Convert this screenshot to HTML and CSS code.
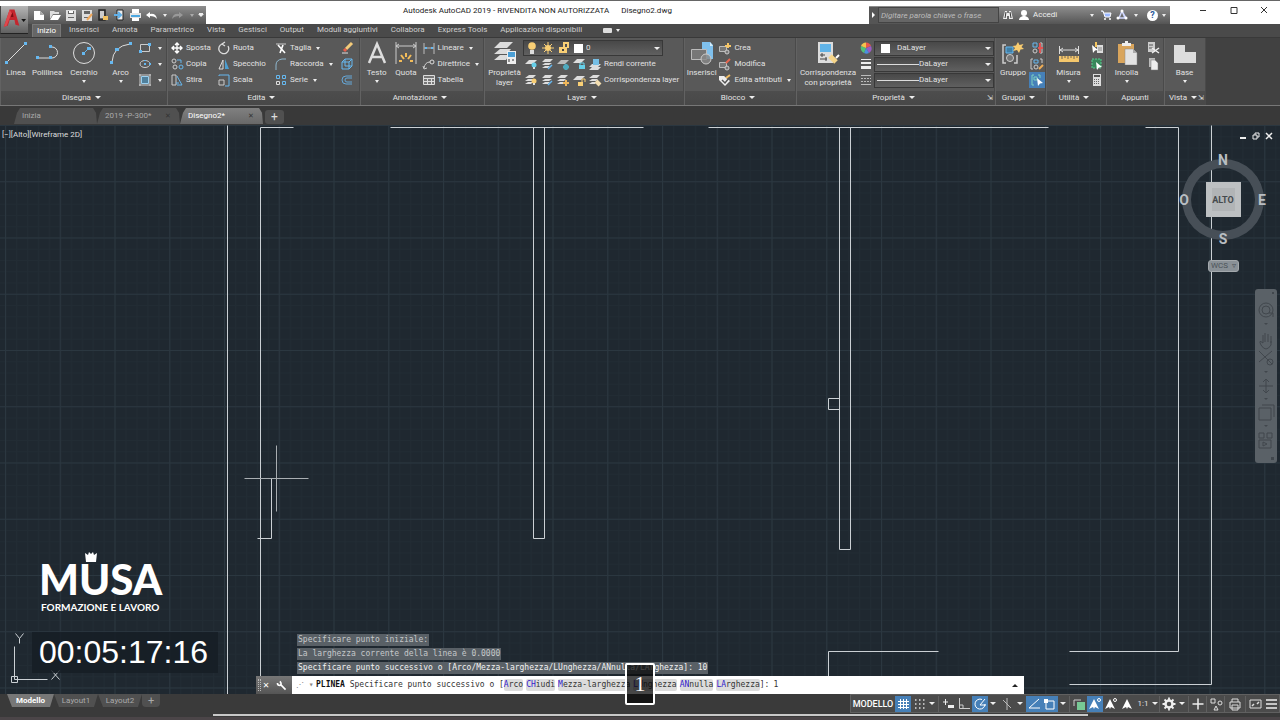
FILE: index.html
```html
<!DOCTYPE html>
<html lang="it">
<head>
<meta charset="utf-8">
<title>Autodesk AutoCAD 2019 - Disegno2.dwg</title>
<link rel="stylesheet" href="styles.css">
</head>
<body>
<svg class="sprite" aria-hidden="true">
  <symbol id="new" viewBox="0 0 16 16"><path fill="#fff" d="M3 4h6l4 4v5H3z"/><path fill="#aaa" d="M9 4v4h4z"/></symbol>
  <symbol id="open" viewBox="0 0 16 16"><path fill="#ddd" d="M3 4h4l1 1h4v2H6l-3 5z"/><path fill="#fff" d="M6 8h8l-3 5H3z"/></symbol>
  <symbol id="save" viewBox="0 0 16 16"><path fill="#ddd" d="M3 3h10v11H3z"/><path fill="#666" d="M5 4h6v3H5zM5 10h6v1H5z"/><path fill="#fff" d="M6 4h4v2H6z"/></symbol>
  <symbol id="saveas" viewBox="0 0 16 16"><path fill="#ddd" d="M3 3h10v11H3z"/><path fill="#666" d="M5 4h6v3H5zM5 10h4v1H5z"/><path stroke="#efa75a" stroke-width="2" d="M8 13l5-6"/></symbol>
  <symbol id="webopen" viewBox="0 0 16 16"><path fill="none" stroke="#222" stroke-width="1.5" d="M4 3h6v10H4z"/><path fill="#ccc" d="M5 4h4v7H5z"/><path fill="#f0c060" d="M8 9h5v4H8z"/></symbol>
  <symbol id="websave" viewBox="0 0 16 16"><path fill="#eee" stroke="#222" d="M6 3h6v10H6z"/><path stroke="#60b0e8" stroke-width="2" d="M3 8h6M7 5l3 3-3 3" fill="none"/></symbol>
  <symbol id="print" viewBox="0 0 16 16"><path fill="#fff" d="M5 2h7v4H5zM5 11h7v3H5z"/><path fill="#e5e5e5" d="M3 6h11v5H3z"/><path fill="#4da7e0" d="M4 8h9v2H4z"/></symbol>
  <symbol id="undo" viewBox="0 0 16 16"><path fill="#fff" d="M3 8l4-3v2q6-1 7 5-2-3-7-3v2z"/></symbol>
  <symbol id="redo" viewBox="0 0 16 16"><path fill="#999" d="M13 8L9 5v2q-6-1-7 5 2-3 7-3v2z"/></symbol>
  <symbol id="binoc" viewBox="0 0 16 16"><path fill="#eee" d="M5 4h2v2h2V4h2l2 8H9V9H7v3H3z"/><path stroke="#333" d="M6 5L5 11M10 5l1 6"/></symbol>
  <symbol id="person" viewBox="0 0 16 16"><circle cx="8" cy="6" r="3" fill="#fff"/><path fill="#fff" d="M3 13q0-3 4-4h2q4 1 4 4z"/></symbol>
  <symbol id="cart" viewBox="0 0 16 16"><path fill="#9bb8ff" stroke="#fff" d="M3 4h2l2 6h5l1-4H6"/><circle cx="7" cy="12" r="1" fill="#fff"/><circle cx="12" cy="12" r="1" fill="#fff"/></symbol>
  <symbol id="a360" viewBox="0 0 16 16"><path fill="none" stroke="#d0d8ff" stroke-width="1.4" d="M8 4L5 11h7zL11 11"/><circle cx="8" cy="4" r="1.5" fill="#fff"/><circle cx="4" cy="11" r="1.5" fill="#fff"/><circle cx="12" cy="11" r="1.5" fill="#fff"/></symbol>

  <symbol id="line" viewBox="0 0 24 24"><path stroke="#ddd" d="M3 21L21 3"/><path fill="#66b8f0" d="M1 20h3v3H1zM20 1h3v3h-3z"/></symbol>
  <symbol id="pline" viewBox="0 0 24 24"><path fill="none" stroke="#ddd" d="M2 17h15a5 5 0 0 0 0-11h-1"/><path fill="#66b8f0" d="M1 15h3v3H1zM14 15h3v3h-3zM14 4h3v3h-3z"/></symbol>
  <symbol id="circle" viewBox="0 0 24 24"><circle cx="12" cy="12" r="10.5" fill="none" stroke="#ddd"/><path stroke="#66b8f0" d="M12 12l5-5"/><path fill="#66b8f0" d="M10 11h3v3h-3zM15 6h4v3h-4z"/></symbol>
  <symbol id="arc" viewBox="0 0 24 24"><path fill="none" stroke="#ddd" d="M3 21Q4 5 21 3"/><path fill="#66b8f0" d="M1 20h3v3H1zM20 1h3v3h-3zM6 7h4v3H6z"/></symbol>
  <symbol id="rect" viewBox="0 0 16 16"><path fill="none" stroke="#ccc" d="M3.500 4.500h9v7h-9z"/><path fill="#66b8f0" d="M2 10h3v3H2zM11 3h3v3h-3z"/></symbol>
  <symbol id="ellipse" viewBox="0 0 16 16"><ellipse cx="8" cy="8" rx="5" ry="3.500" fill="none" stroke="#ccc"/><path fill="#66b8f0" d="M7 7h2v2H7zM12 7h2v2h-2zM7 4h2v1H7z"/></symbol>
  <symbol id="hatch" viewBox="0 0 16 16"><path fill="#50809c" stroke="#9cd0ee" d="M4.500 4.500h7v7h-7z"/><path stroke="#ccc" d="M3 2v12M13 2v12M2 3h12M2 13h12" fill="none"/></symbol>
  <symbol id="move" viewBox="0 0 16 16"><path fill="none" stroke="#fff" stroke-width="1.400" d="M8 3v10M3 8h10M6 5l2-2 2 2M6 11l2 2 2-2M5 6L3 8l2 2M11 6l2 2-2 2"/></symbol>
  <symbol id="copy" viewBox="0 0 16 16"><g fill="none" stroke="#ccc"><circle cx="5" cy="5" r="2"/><circle cx="6" cy="11" r="2"/><path stroke="#66b8f0" d="M10 4h2v3M8 4h2"/><circle stroke="#66b8f0" cx="12" cy="11" r="2"/></g></symbol>
  <symbol id="stretch" viewBox="0 0 16 16"><path fill="none" stroke="#ccc" d="M3 3h4v10H3z"/><path fill="none" stroke="#66b8f0" d="M8 4l5 9H8M7 11h3"/></symbol>
  <symbol id="rotate" viewBox="0 0 16 16"><path fill="none" stroke="#ddd" stroke-width="1.300" d="M6 4a5 5 0 1 0 6 2M9 2l-3 2 3 2"/></symbol>
  <symbol id="mirror" viewBox="0 0 16 16"><path fill="#4d9ed0" d="M9 3l4 10H9z"/><path fill="none" stroke="#ddd" d="M7 4v9H3z"/></symbol>
  <symbol id="scale" viewBox="0 0 16 16"><path fill="none" stroke="#66b8f0" d="M3 4V3h10v11H9"/><path fill="none" stroke="#ccc" d="M3 8h5v5H3z"/></symbol>
  <symbol id="trim" viewBox="0 0 16 16"><path stroke="#ccc" d="M3 4h10"/><path stroke="#fff" stroke-width="1.600" d="M5 5l7 8M10 5l-3 8"/></symbol>
  <symbol id="fillet" viewBox="0 0 16 16"><path fill="none" stroke="#8fb8d0" d="M3 14V9q0-5 6-6h4"/></symbol>
  <symbol id="array" viewBox="0 0 16 16"><path fill="none" stroke="#66b8f0" d="M3.500 3.500h3v3h-3zM9.500 3.500h3v3h-3zM9.500 9.500h3v3h-3z"/><path fill="none" stroke="#ddd" d="M3.500 9.500h3v3h-3z"/></symbol>
  <symbol id="erase" viewBox="0 0 16 16"><path stroke="#f4cb7a" stroke-width="3" d="M7 9l6-6"/><path stroke="#e85d4a" stroke-width="3" d="M5 11l2-2"/><path stroke="#ddd" d="M3 13h6"/></symbol>
  <symbol id="explode" viewBox="0 0 16 16"><path fill="none" stroke="#66b8f0" d="M3 6h7v7H3zM3 6l3-3h7v7l-3 3M10 6l3-3M6 3v7h7"/></symbol>
  <symbol id="offset" viewBox="0 0 16 16"><path fill="none" stroke="#66a8d8" d="M13 4H7a4 4 0 0 0 0 8h6M13 6H8a2 2 0 0 0 0 4h5"/></symbol>
  <symbol id="text" viewBox="0 0 24 24"><path fill="none" stroke="#ddd" stroke-width="2.500" d="M4 22l8-19 8 19M7 16h10"/></symbol>
  <symbol id="dim" viewBox="0 0 24 24"><path fill="none" stroke="#ccc" d="M2 1v22M22 1v22M2 5h20M5 3L2 5l3 2M19 3l3 2-3 2"/><path stroke="#f2bc5a" stroke-width="2" d="M12 12v4M7 14l3 4M17 14l-3 4M5 20h3M16 20h3"/></symbol>
  <symbol id="linear" viewBox="0 0 16 16"><path fill="none" stroke="#bbb" d="M3 3v11M13 3v11M3 8h10"/><path fill="#66b8f0" d="M4 7h2v2H4zM10 7h2v2h-2z"/></symbol>
  <symbol id="leader" viewBox="0 0 16 16"><path fill="none" stroke="#ccc" d="M3 12q1-6 6-6M2 10l1 3 3-1"/><circle cx="11" cy="6" r="2" fill="none" stroke="#ddd"/></symbol>
  <symbol id="table" viewBox="0 0 16 16"><path fill="#777" stroke="#ddd" d="M2.500 3.500h11v9h-11zM2 6.500h12M2 9.500h12M6.500 6v7M10.500 6v7"/></symbol>
  <symbol id="layers" viewBox="0 0 24 24"><path fill="#ddd" d="M7 1h13l-6 6H1zM7 8h11l-4 5H1zM7 14h9l-3 5H1z"/><path fill="#eee" d="M14 10h9v13h-9z"/><path fill="#4b9fd5" d="M15 11h7v5h-7z"/><path stroke="#333" d="M16 18v3M19 19h2"/></symbol>
  <symbol id="bulb" viewBox="0 0 16 16"><circle cx="8" cy="6" r="3.800" fill="#f9cf75"/><path fill="#ddd" d="M6 10h4v4H6z"/></symbol>
  <symbol id="sun" viewBox="0 0 16 16"><circle cx="8" cy="8" r="3" fill="#f9cf75"/><path stroke="#f9cf75" d="M8 2v12M2 8h12M4 4l8 8M12 4l-8 8"/></symbol>
  <symbol id="lock" viewBox="0 0 16 16"><path fill="#f9cf75" d="M3 7h8v6H3z"/><path fill="none" stroke="#f9cf75" stroke-width="2" d="M8 7V3h4v5"/><path fill="#444" d="M6 9h2v2H6z"/></symbol>
  <symbol id="lyc1" viewBox="0 0 16 16"><path fill="#ddd" d="M6 4h8l-4 4H2z"/><circle cx="11" cy="9" r="2.500" fill="#66cfe8"/><path fill="#ddd" d="M10 11h2v2h-2z"/></symbol>
  <symbol id="lyc2" viewBox="0 0 16 16"><path fill="#ddd" d="M6 3h8l-3 3H3zM6 7h7l-3 2H3zM6 10h5l-2 2H3z"/><path stroke="#66b8f0" stroke-width="1.500" d="M9 13l4-4"/></symbol>
  <symbol id="lyc3" viewBox="0 0 16 16"><path fill="#bbb" d="M6 4h8l-4 4H2z"/><path stroke="#4fa9bd" stroke-width="2" d="M8 11h6M11 8v6M9 9l4 4M13 9l-4 4"/></symbol>
  <symbol id="lyc4" viewBox="0 0 16 16"><path fill="#ddd" d="M6 3h8l-4 4H2z"/><path fill="#66cfe8" d="M8 9h6v4H8z"/><path fill="none" stroke="#66cfe8" d="M9 9V7h4v2"/></symbol>
  <symbol id="lyc5" viewBox="0 0 16 16"><path fill="#ddd" d="M5 8h9l-3 3H2zM5 11h9l-3 3H2z"/><path fill="#77bfe5" d="M6 3h6v6H6z"/></symbol>
  <symbol id="lyd1" viewBox="0 0 16 16"><path fill="#ddd" d="M6 3h7l-3 3H2zM5 7h6l-2 2H2zM5 10h5l-2 2H2z"/><circle cx="11" cy="9" r="2.500" fill="#f9cf75"/><path fill="#ddd" d="M10 11h2v2h-2z"/></symbol>
  <symbol id="lyd3" viewBox="0 0 16 16"><path fill="#ddd" d="M6 3h7l-3 3H2zM5 7h6l-2 2H2zM5 10h5l-2 2H2z"/><path stroke="#efb75b" stroke-width="2" d="M8 11h6M11 8v6"/></symbol>
  <symbol id="lyd4" viewBox="0 0 16 16"><path fill="#ddd" d="M6 4h8l-4 4H2z"/><path fill="#f9cf75" d="M7 10h5v4H7z"/><path fill="none" stroke="#f9cf75" d="M11 10V7h3v3"/></symbol>
  <symbol id="lyd5" viewBox="0 0 16 16"><path fill="#ddd" d="M6 3h7l-3 3H2zM5 7h6l-2 2H2zM5 10h5l-2 2H2z"/><path stroke="#f2ddb0" stroke-width="4" d="M9 9l4 4"/></symbol>
  <symbol id="insert" viewBox="0 0 24 24"><path fill="#7fc0ed" d="M12 1h8l3 3v14H12z"/><path fill="#d5ecfa" d="M20 1v4h3z"/><path fill="#777" stroke="#bbb" d="M1.500 8.500h15v10h-15z"/><circle cx="16" cy="18" r="5" fill="#888c" stroke="#ccc"/></symbol>
  <symbol id="create" viewBox="0 0 16 16"><path fill="#777" stroke="#bbb" d="M2.500 6.500h7v5h-7z"/><circle cx="10" cy="12" r="2" fill="#777" stroke="#ccc"/><path stroke="#f6c667" stroke-width="2" d="M11 3v5M8 6h6"/></symbol>
  <symbol id="modify" viewBox="0 0 16 16"><path fill="#777" stroke="#bbb" d="M2.500 6.500h7v5h-7z"/><circle cx="10" cy="12" r="2" fill="#777" stroke="#ccc"/><path stroke="#e8654e" stroke-width="2" d="M9 7l4-4"/></symbol>
  <symbol id="attr" viewBox="0 0 16 16"><path fill="#eee" d="M2 4h5l6 5-5 5-6-6z"/><path stroke="#555" stroke-width="1.500" fill="none" d="M5 8l3 3 4-5"/><path stroke="#efbb62" stroke-width="2" d="M9 6l4-3"/></symbol>
  <symbol id="match" viewBox="0 0 24 24"><path fill="#ddd" d="M2 1h15v21H2z"/><path fill="#61b4e8" d="M4 3h11v8H4z"/><path stroke="#444" d="M4 14h5M4 18h7M6 12v4M10 16v4"/><path stroke="#f6d589" stroke-width="5" d="M14 15l6 6"/><path stroke="#fff" stroke-width="2" d="M20 17l3-3"/></symbol>
  <symbol id="wheel" viewBox="0 0 16 16"><path fill="#e8564a" d="M8 8V2.500a5.500 5.500 0 0 1 5 3.500z"/><path fill="#9a5bc4" d="M8 8l5-2a5.500 5.500 0 0 1-2 7z"/><path fill="#4b8fe0" d="M8 8l3 5a5.500 5.500 0 0 1-5 0z"/><path fill="#52c07a" d="M8 8l-2 5a5.500 5.500 0 0 1-3-7z"/><path fill="#f6c14b" d="M8 8L3 6a5.500 5.500 0 0 1 5-3.500z"/></symbol>
  <symbol id="weight" viewBox="0 0 16 16"><path fill="#eee" d="M3 3h10v1H3zM3 6h10v2H3zM3 10h10v3H3z"/></symbol>
  <symbol id="ltype" viewBox="0 0 16 16"><path stroke="#bbb" d="M3 3.500h10M3 12.500h10"/><path stroke="#bbb" stroke-dasharray="2 1" d="M3 6.500h10M3 9.500h10"/></symbol>
  <symbol id="group" viewBox="0 0 24 24"><path fill="none" stroke="#ccc" stroke-width="1.500" d="M5 4H2v18h3M13 22h3v-8"/><path fill="#417fa5" stroke="#66b8f0" d="M5 6h7v6H5z"/><circle cx="9" cy="17" r="3.500" fill="#777" stroke="#ccc"/><path fill="#f8cc70" d="M17 1l1.500 3 4-1-2 3 2.500 2-3.500.5L18 12l-2-3-4 1 2-3-2.500-2 3.500-.5z"/></symbol>
  <symbol id="ungroup" viewBox="0 0 16 16"><path fill="none" stroke="#ccc" d="M11 3h2v10h-2"/><path fill="none" stroke="#66b8f0" d="M4 3h4v4H4z"/><circle cx="6" cy="11" r="2" fill="none" stroke="#ccc"/><path stroke="#e05555" stroke-width="2" d="M9 8h5M11 3v10"/></symbol>
  <symbol id="gedit" viewBox="0 0 16 16"><path fill="none" stroke="#ccc" d="M4 3H2v10h2M11 3h2v4"/><path fill="none" stroke="#66b8f0" d="M5 4h4v3H5z"/><circle cx="7" cy="11" r="2" fill="none" stroke="#ccc"/><path stroke="#efad55" stroke-width="2" d="M10 13l4-4"/></symbol>
  <symbol id="gsel" viewBox="0 0 16 16"><path fill="none" stroke="#7fd0c0" d="M5 3H3v10h2M9 3h2v3M5 5h3v3H5z"/><path fill="#fff" d="M8 6l6 5-3 .5L9 14z"/></symbol>
  <symbol id="measure" viewBox="0 0 24 24"><path fill="none" stroke="#ddd" d="M2.500 5v8M21.500 5v8M3 9h18M6 7L3 9l3 2M18 7l3 2-3 2"/><path fill="#f4c76c" d="M2 15h20v6H2z"/><path stroke="#765" d="M5 15v3M8 15v2M11 15v3M14 15v2M17 15v3M20 15v2"/></symbol>
  <symbol id="qsel" viewBox="0 0 16 16"><path fill="#ddd" d="M8 5h6v8H8z"/><path stroke="#888" d="M9 8h4M9 10h4"/><path fill="#fff" d="M3 5l6 5-3 .5L4 13z"/><path stroke="#f5c660" stroke-width="2" d="M7 2v5"/></symbol>
  <symbol id="selall" viewBox="0 0 16 16"><path fill="#39875b" stroke="#58cf8f" stroke-dasharray="2 1" d="M3 3h9v9H3z"/><path fill="#fff" d="M7 6l6 5-3 .5L8 14z"/></symbol>
  <symbol id="calc" viewBox="0 0 16 16"><path fill="#ddd" d="M4 2h8v12H4z"/><path fill="#555" d="M5 3h6v2H5z"/><path stroke="#666" stroke-dasharray="1 1" d="M5 7.500h6M5 9.500h6M5 11.500h6"/></symbol>
  <symbol id="paste" viewBox="0 0 24 24"><path fill="#d9a55c" d="M3 3h16v19H3z"/><path fill="#eee" d="M7 2h3V0h3v2h3v3H7z"/><path fill="#e2e2e2" stroke="#888" stroke-width=".5" d="M10 8h8l4 4v12H10z"/><path fill="#aaa" d="M18 8v4h4z"/></symbol>
  <symbol id="cut" viewBox="0 0 16 16"><path fill="#ccc" d="M3 2h7v10H3z"/><path stroke="#555" d="M4 5h4M4 8h4"/><path stroke="#eee" stroke-width="1.500" d="M7 13l7-5M7 8l7 5"/></symbol>
  <symbol id="clip" viewBox="0 0 16 16"><path fill="#bbb" d="M4 2h6v9H4z"/><path fill="#eee" stroke="#777" stroke-width=".5" d="M6 4h4l3 3v7H6z"/></symbol>
  <symbol id="base" viewBox="0 0 24 24"><path fill="#ddd" d="M1 4h11v7h11v11H1z"/></symbol>

  <symbol id="grid" viewBox="0 0 16 16"><path stroke="#fff" d="M5.500 3v10M8.500 3v10M11.500 3v10M3 5.500h11M3 8.500h11M3 11.500h11"/></symbol>
  <symbol id="snap" viewBox="0 0 16 16"><path stroke="#ddd" stroke-width="1.500" stroke-dasharray="1.500 2.500" d="M4 4h10M4 8h10M4 12h10"/></symbol>
  <symbol id="dyn" viewBox="0 0 16 16"><path stroke="#eee" d="M3 6h5M5.500 3v6"/><path fill="#eee" d="M8 9h6v3H8z"/></symbol>
  <symbol id="ortho" viewBox="0 0 16 16"><path fill="none" stroke="#ccc" d="M3.500 2v10.500H14M4 9h3v3"/></symbol>
  <symbol id="polar" viewBox="0 0 16 16"><path fill="none" stroke="#fff" d="M13 8a5 5 0 1 1-3-4.500M8 9l5-6M8 9h6"/></symbol>
  <symbol id="iso" viewBox="0 0 16 16"><path stroke="#bbb" d="M8 2v12M4 4l8 8"/></symbol>
  <symbol id="track" viewBox="0 0 16 16"><path fill="none" stroke="#fff" d="M13 3L3 12h11"/></symbol>
  <symbol id="osnap" viewBox="0 0 16 16"><path fill="none" stroke="#fff" d="M4 5h8v8H4z"/><path fill="#fff" d="M2 3h4v4H2z"/></symbol>
  <symbol id="cycle" viewBox="0 0 16 16"><path fill="#77c995" d="M6 6h8v8H6z"/><path fill="none" stroke="#ccc" d="M10 4H3v6"/></symbol>
  <symbol id="ann" viewBox="0 0 16 16"><path fill="#fff" d="M8 3l5 10-4-2-1 2-1-2-4 2z"/></symbol>
  <symbol id="ann2" viewBox="0 0 16 16"><path fill="#fff" d="M7 3l5 10-4-2-1 2-1-2-4 2z"/><circle cx="12" cy="4" r="1.500" fill="none" stroke="#fff"/></symbol>
  <symbol id="gear" viewBox="0 0 16 16"><circle cx="8" cy="8" r="3.500" fill="none" stroke="#eee" stroke-width="2.500"/><path stroke="#eee" stroke-width="1.800" d="M8 1.500V4M8 12v2.500M1.500 8H4M12 8h2.500M3.500 3.500l2 2M10.500 10.500l2 2M3.500 12.500l2-2M10.500 5.500l2-2"/></symbol>
  <symbol id="plus" viewBox="0 0 16 16"><path stroke="#eee" stroke-width="1.500" d="M8 2.500v11M2.500 8h11"/></symbol>
  <symbol id="iso2" viewBox="0 0 16 16"><path fill="none" stroke="#ddd" d="M3 3h4v4H3zM6 14l2-4 2 4z"/><circle cx="12" cy="7" r="2" fill="none" stroke="#ddd"/></symbol>
  <symbol id="hw" viewBox="0 0 16 16"><path fill="none" stroke="#ddd" d="M5 6V3h6v3M3 6h10v6H3zM5 9h6v5H5z"/></symbol>
  <symbol id="full" viewBox="0 0 16 16"><path fill="none" stroke="#ddd" d="M3 4h11v8H3z"/><path stroke="#ddd" stroke-width="1.500" d="M5 10l2-2M12 6l-2 2"/></symbol>
  <symbol id="menu" viewBox="0 0 16 16"><path stroke="#eee" stroke-width="1.500" d="M3 4h11M3 8h11M3 12h11"/></symbol>
  <symbol id="wrench" viewBox="0 0 16 16"><path stroke="#fff" stroke-width="2" d="M7 7l6 6"/><path fill="none" stroke="#fff" stroke-width="2" d="M6 3q3 3 0 5-3 0-3-3"/></symbol>
</svg>

<header class="titlebar">
  <button class="appbtn" aria-label="Menu applicazione"><svg viewBox="0 0 28 26"><path fill="#c4262e" d="M9 2h5l5 17-4-1-1-5H9l-2 6-4 1z"/><path fill="#7d1015" d="M10 10l2-5 1 5z"/><path fill="#e0474c" d="M9 2L3 20l3-1 5-13z"/><path fill="#111" d="M21 12h5l-2.500 3z"/></svg></button>
  <div class="qat">
    <button aria-label="Nuovo"><svg><use href="#new"/></svg></button><button aria-label="Apri"><svg><use href="#open"/></svg></button><button aria-label="Salva"><svg><use href="#save"/></svg></button><button aria-label="Salva con nome"><svg><use href="#saveas"/></svg></button><button aria-label="Apri da Web"><svg><use href="#webopen"/></svg></button><button aria-label="Salva su Web"><svg><use href="#websave"/></svg></button><button aria-label="Stampa"><svg><use href="#print"/></svg></button><button aria-label="Annulla"><svg><use href="#undo"/></svg></button><i class="caret"></i><button aria-label="Ripeti"><svg><use href="#redo"/></svg></button><i class="caret dim"></i><i class="caret bar"></i>
  </div>
  <h1 class="title"><span>Autodesk AutoCAD 2019 - RIVENDITA NON AUTORIZZATA</span><span>Disegno2.dwg</span></h1>
  <div class="info">
    <button class="expand" aria-label="Espandi"></button>
    <input class="search" aria-label="Cerca" placeholder="Digitare parola chiave o frase">
    <button aria-label="Cerca"><svg><use href="#binoc"/></svg></button>
    <button class="login"><svg><use href="#person"/></svg>Accedi<i class="caret"></i></button>
    <button aria-label="Negozio"><svg><use href="#cart"/></svg></button>
    <button aria-label="App"><svg><use href="#a360"/></svg></button><i class="caret"></i>
    <button class="help" aria-label="Guida"><b>?</b></button><i class="caret"></i>
  </div>
  <div class="winbtns">
    <button aria-label="Riduci"><svg viewBox="0 0 10 10"><path d="M2 5.500h6"/></svg></button>
    <button aria-label="Ingrandisci"><svg viewBox="0 0 10 10"><path d="M2 2.500h6v6H2z"/></svg></button>
    <button aria-label="Chiudi"><svg viewBox="0 0 10 10"><path d="M2 2l6 6M8 2L2 8"/></svg></button>
  </div>
</header>

<nav class="rtabs">
  <button class="on">Inizio</button><button>Inserisci</button><button>Annota</button><button>Parametrico</button><button>Vista</button><button>Gestisci</button><button>Output</button><button>Moduli aggiuntivi</button><button>Collabora</button><button>Express Tools</button><button>Applicazioni disponibili</button>
  <button class="mini" aria-label="Riduci barra"><span></span><i class="caret"></i></button>
</nav>

<section class="ribbon">
  <div class="panel p-dis"><div class="body">
    <button class="big w30"><svg><use href="#line"/></svg>Linea</button>
    <button class="big w32"><svg><use href="#pline"/></svg>Polilinea</button>
    <button class="big w42"><svg><use href="#circle"/></svg>Cerchio<i class="caret"></i></button>
    <button class="big w32"><svg><use href="#arc"/></svg>Arco<i class="caret"></i></button>
    <div class="col"><button aria-label="Rettangolo"><svg><use href="#rect"/></svg><i class="caret"></i></button><button aria-label="Ellisse"><svg><use href="#ellipse"/></svg><i class="caret"></i></button><button aria-label="Tratteggio"><svg><use href="#hatch"/></svg><i class="caret"></i></button></div>
  </div><footer>Disegna<i class="caret"></i></footer></div>

  <div class="panel p-edi"><div class="body">
    <div class="col w47"><button><svg><use href="#move"/></svg>Sposta</button><button><svg><use href="#copy"/></svg>Copia</button><button><svg><use href="#stretch"/></svg>Stira</button></div>
    <div class="col w57"><button><svg><use href="#rotate"/></svg>Ruota</button><button><svg><use href="#mirror"/></svg>Specchio</button><button><svg><use href="#scale"/></svg>Scala</button></div>
    <div class="col w66"><button><svg><use href="#trim"/></svg>Taglia<i class="caret"></i></button><button><svg><use href="#fillet"/></svg>Raccorda<i class="caret"></i></button><button><svg><use href="#array"/></svg>Serie<i class="caret"></i></button></div>
    <div class="col"><button aria-label="Cancella"><svg><use href="#erase"/></svg></button><button aria-label="Esplodi"><svg><use href="#explode"/></svg></button><button aria-label="Offset"><svg><use href="#offset"/></svg></button></div>
  </div><footer>Edita<i class="caret"></i></footer></div>

  <div class="panel p-ann"><div class="body">
    <button class="big w30"><svg><use href="#text"/></svg>Testo<i class="caret"></i></button>
    <button class="big w30"><svg><use href="#dim"/></svg>Quota</button>
    <div class="col"><button><svg><use href="#linear"/></svg>Lineare<i class="caret"></i></button><button><svg><use href="#leader"/></svg>Direttrice<i class="caret"></i></button><button><svg><use href="#table"/></svg>Tabella</button></div>
  </div><footer>Annotazione<i class="caret"></i></footer></div>

  <div class="panel p-lay"><div class="body">
    <button class="big w36"><svg><use href="#layers"/></svg>Proprietà<br>layer</button>
    <div class="col laycol">
      <label class="combo"><svg><use href="#bulb"/></svg><svg><use href="#sun"/></svg><svg><use href="#lock"/></svg><i class="sw"></i><select aria-label="Layer"><option>0</option></select><i class="caret"></i></label>
      <div class="row"><button aria-label="Disattiva"><svg><use href="#lyc1"/></svg></button><button aria-label="Isola"><svg><use href="#lyc2"/></svg></button><button aria-label="Congela"><svg><use href="#lyc3"/></svg></button><button aria-label="Blocca"><svg><use href="#lyc4"/></svg></button><button><svg><use href="#lyc5"/></svg>Rendi corrente</button></div>
      <div class="row"><button aria-label="Attiva"><svg><use href="#lyd1"/></svg></button><button aria-label="Annulla isola"><svg><use href="#lyc2"/></svg></button><button aria-label="Scongela"><svg><use href="#lyd3"/></svg></button><button aria-label="Sblocca"><svg><use href="#lyd4"/></svg></button><button><svg><use href="#lyd5"/></svg>Corrispondenza layer</button></div>
    </div>
  </div><footer>Layer<i class="caret"></i></footer></div>

  <div class="panel p-blo"><div class="body">
    <button class="big w32"><svg><use href="#insert"/></svg>Inserisci</button>
    <div class="col"><button><svg><use href="#create"/></svg>Crea</button><button><svg><use href="#modify"/></svg>Modifica</button><button><svg><use href="#attr"/></svg>Edita attributi<i class="caret"></i></button></div>
  </div><footer>Blocco<i class="caret"></i></footer></div>

  <div class="panel p-pro"><div class="body">
    <button class="big w60"><svg><use href="#match"/></svg>Corrispondenza<br>con proprietà</button>
    <div class="col grow">
      <div class="row"><svg><use href="#wheel"/></svg><label class="combo color"><i class="sw"></i><select aria-label="Colore"><option>DaLayer</option></select><i class="caret"></i></label></div>
      <div class="row"><svg><use href="#weight"/></svg><label class="combo"><i class="ln"></i><select aria-label="Spessore linea"><option>DaLayer</option></select><i class="caret"></i></label></div>
      <div class="row"><svg><use href="#ltype"/></svg><label class="combo"><i class="ln"></i><select aria-label="Tipo di linea"><option>DaLayer</option></select><i class="caret"></i></label></div>
    </div>
  </div><footer>Proprietà<i class="caret"></i><i class="launch">⇲</i></footer></div>

  <div class="panel p-gru"><div class="body">
    <button class="big w32"><svg><use href="#group"/></svg>Gruppo</button>
    <div class="col"><button aria-label="Separa"><svg><use href="#ungroup"/></svg></button><button aria-label="Modifica gruppo"><svg><use href="#gedit"/></svg></button><button class="act" aria-label="Selezione gruppo"><svg><use href="#gsel"/></svg></button></div>
  </div><footer>Gruppi<i class="caret"></i></footer></div>

  <div class="panel p-uti"><div class="body">
    <button class="big w42"><svg><use href="#measure"/></svg>Misura<i class="caret"></i></button>
    <div class="col"><button aria-label="Selezione rapida"><svg><use href="#qsel"/></svg></button><button aria-label="Seleziona tutto"><svg><use href="#selall"/></svg></button><button aria-label="Calcolatrice"><svg><use href="#calc"/></svg></button></div>
  </div><footer>Utilità<i class="caret"></i></footer></div>

  <div class="panel p-app"><div class="body">
    <button class="big w36"><svg><use href="#paste"/></svg>Incolla<i class="caret"></i></button>
    <div class="col"><button aria-label="Taglia"><svg><use href="#cut"/></svg></button><button aria-label="Copia"><svg><use href="#clip"/></svg></button></div>
  </div><footer>Appunti</footer></div>

  <div class="panel p-vis"><div class="body">
    <button class="big w36"><svg><use href="#base"/></svg>Base<i class="caret"></i></button>
  </div><footer>Vista<i class="caret"></i><i class="launch">⇲</i></footer></div>
</section>

<nav class="ftabs">
  <button>Inizia</button><button>2019 -P-300*<span>✕</span></button><button class="on">Disegno2*<span>✕</span></button><button class="add" aria-label="Nuovo disegno">+</button>
</nav>

<main class="canvas">
  <svg class="drawing" aria-label="Disegno">
    <defs>
      <pattern id="minor" x="5" y="0" width="10.950" height="11.250" patternUnits="userSpaceOnUse"><path class="gmin" d="M.5 0v12M0 .5h11"/></pattern>
      <pattern id="major" x="5" y="0" width="54.750" height="56.250" patternUnits="userSpaceOnUse"><path class="gmaj" d="M.5 0v57M0 .5h55"/></pattern>
    </defs>
    <rect width="100%" height="100%" fill="url(#minor)"/><rect width="100%" height="100%" fill="url(#major)"/>
    <g class="plan" transform="translate(.5 -124.500)">
      <path d="M227 125V695M260 695V127h33M390 127h253M708 127h340M1145 127h33v524h-109M1211 125v559h-142"/>
      <path d="M533 127v411h11V127M839 127v422h11V127M839 398h-11v11h11M828 695v-44h110M271 478v60h-11"/>
      <path class="cross" d="M244 478h64M276 445v66"/><path d="M257 538h6M260 535v6"/>
      <path d="M14 646v33h33M11 676h6v6h-6zM15 633l4 5 4-5M19 638v5M51 670l8 9M59 670l-8 9"/>
    </g>
  </svg>

  <span class="vplabel">[−][Alto][Wireframe 2D]</span>
  <div class="vpbtns"><button aria-label="Riduci vista"><svg viewBox="0 0 10 10"><path stroke-width="2" d="M2 7h6"/></svg></button><button aria-label="Ripristina vista"><svg viewBox="0 0 10 10"><path d="M2 4h4v4H2zM4 4V2h4v4H6"/></svg></button><button aria-label="Chiudi vista"><svg viewBox="0 0 10 10"><path stroke-width="1.500" d="M2 2l6 6M8 2L2 8"/></svg></button></div>

  <div class="cube"><span class="ring"></span><span class="n">N</span><span class="w">O</span><button>ALTO</button><span class="e">E</span><span class="s">S</span></div>
  <button class="wcs">WCS <span>▿</span></button>

  <div class="navbar" aria-label="Barra di navigazione">
    <svg viewBox="0 0 22 174"><g fill="none" stroke="#41474d"><circle cx="11" cy="21" r="7"/><circle cx="11" cy="21" r="4"/><path d="M14 24h4v4M6 56q-3-6 2-2V46M10 53v-9M13 53v-8M16 54v-7M6 56q5 8 10 0v-4M4 62l13 13M17 62L4 73"/><circle cx="15" cy="73" r="3"/><path d="M11 90v14M4 97h14M8 93l3-3 3 3M8 101l3 3 3-3M4 119v12h12v-12zM7 116h12v12M4 144h5v5H4zM12 144h5v5h-5zM4 151h12v8H4zM8 153l4 2-4 2z"/></g><path fill="#41474d" d="M9 34h4l-2 2zM9 82h4l-2 2zM9 109h4l-2 2zM9 136h4l-2 2zM17 3h2v2h-2zM16 168h3v3h-3z"/></svg>
  </div>

  <div class="brand">
    <svg class="crown" viewBox="0 0 12 10"><path fill="#fff" d="M0 1l3 2 1-3 2 2 2-2 1 3 3-2-1 9H1z"/></svg>
    <strong>MUSA</strong><span>FORMAZIONE E LAVORO</span>
  </div>
  <time class="timer">00:05:17:16</time>

  <div class="cmd">
    <div class="hist"><p class="old">Specificare punto iniziale:</p><p class="old">La larghezza corrente della linea è 0.0000</p><p>Specificare punto successivo o [Arco/Mezza-larghezza/LUnghezza/ANnulla/LArghezza]: 10</p></div>
    <div class="cmdline">
      <div class="grip"><i></i><button aria-label="Chiudi">✕</button><button aria-label="Personalizza"><svg><use href="#wrench"/></svg></button></div>
      <span class="recent">⋰ ▾</span><label for="cmdin"><b>PLINEA</b> Specificare punto successivo o [</label><div class="opts"><button><em>A</em>rco</button><button><em>CH</em>iudi</button><button><em>M</em>ezza-larghezza</button><button><em>LU</em>nghezza</button><button><em>AN</em>nulla</button><button><em>LA</em>rghezza</button></div><span>]:</span><input id="cmdin" value="1"><button class="up" aria-label="Cronologia"></button>
    </div>
  </div>
  <kbd class="key">1</kbd>
</main>

<footer class="bottom">
  <nav class="ltabs"><button class="on">Modello</button><button>Layout1</button><button>Layout2</button><button class="add" aria-label="Nuovo layout">+</button></nav>
  <div class="status">
    <button class="model">MODELLO</button><button class="act" aria-label="Griglia"><svg><use href="#grid"/></svg></button><button aria-label="Snap"><svg><use href="#snap"/></svg></button><i class="caret"></i><button class="sep" aria-label="Input dinamico"><svg><use href="#dyn"/></svg></button><button aria-label="Orto"><svg><use href="#ortho"/></svg></button><button class="act" aria-label="Polare"><svg><use href="#polar"/></svg></button><i class="caret"></i><button aria-label="Isometrico"><svg><use href="#iso"/></svg></button><i class="caret"></i><button class="act" aria-label="Puntamento"><svg><use href="#track"/></svg></button><button class="act" aria-label="Snap a oggetto"><svg><use href="#osnap"/></svg></button><i class="caret"></i><button class="sep" aria-label="Ciclo selezione"><svg><use href="#cycle"/></svg></button><button class="act" aria-label="Visibilità annotazioni"><svg><use href="#ann2"/></svg></button><button aria-label="Scala automatica"><svg><use href="#ann2"/></svg></button><button aria-label="Annotazioni"><svg><use href="#ann"/></svg></button><button>1:1</button><i class="caret tight"></i><button class="sep" aria-label="Impostazioni"><svg><use href="#gear"/></svg></button><i class="caret"></i><button class="sep" aria-label="Aggiungi"><svg><use href="#plus"/></svg></button><button class="sep" aria-label="Isola oggetti"><svg><use href="#iso2"/></svg></button><button class="sep wide" aria-label="Hardware"><svg><use href="#hw"/></svg></button><button class="sep" aria-label="Schermo intero"><svg><use href="#full"/></svg></button><button aria-label="Personalizzazione"><svg><use href="#menu"/></svg></button>
  </div>
  <div class="progress"><span></span></div>
</footer>
</body>
</html>
```
FILE: styles.css
```css
* { box-sizing: border-box; }
body { margin: 0; height: 100vh; display: flex; flex-direction: column; background: #3a3a3a; color: #e2e2e2; font: 8px/10px Roboto, "Open Sans", sans-serif; overflow: hidden; }
button, select, input { font: inherit; color: inherit; background: none; border: 0; padding: 0; margin: 0; }
button { display: flex; align-items: center; white-space: nowrap; }
p, h1 { margin: 0; font: inherit; }
i, em { font-style: normal; }
svg { width: 16px; height: 16px; flex: none; display: block; }
.sprite { width: 0; height: 0; position: absolute; }
.caret { width: 0; height: 0; border: 2px solid transparent; border-top: 3px solid #eee; border-bottom: 0; margin: 0 4px; flex: none; }
.caret.dim { border-top-color: #aaa; }
.qat .caret { margin: 0 3px 0 4px; }
.qat .caret.bar { border-width: 3px 3px 0; margin: 0 2px 0 1px; box-shadow: 0 -2px 0 -1px #eee; }

.titlebar { height: 24px; flex: none; display: flex; align-items: flex-end; background: #fff; border-top: 1px solid #666; color: #222; }
.appbtn { width: 28px; height: 28px; align-self: flex-start; margin-top: 5px; background: linear-gradient(#b5b5b5, #606060); z-index: 2; border-left: 1px solid #444; border-bottom: 1px solid #222; }
.appbtn svg { width: 27px; height: 26px; }
.qat, .info { height: 18px; display: flex; align-items: center; background: linear-gradient(#8e8e8e, #555); color: #eee; }
.qat { padding-left: 3px; }
.title { flex: 1; display: flex; justify-content: center; gap: 12px; height: 24px; align-items: center; padding-bottom: 2px; }
.expand { width: 9px; height: 17px; background: #555; justify-content: center; }
.expand::after { content: ""; border: 3px solid transparent; border-left-color: #fff; border-right: 0; }
.search { width: 121px; height: 16px; background: #666; border: 1px solid #444; padding: 0 2px; font-style: italic; margin-right: 1px; }
.search::placeholder { color: #bbb; }
.login { width: 82px; gap: 1px; }
.login .caret { margin-left: auto; }
.help { width: 16px; justify-content: flex-end; }
.help b { width: 11px; height: 11px; border-radius: 50%; background: #fff; color: #2a5a9c; text-align: center; font-size: 9px; line-height: 11px; }
.winbtns { width: 110px; height: 20px; display: flex; justify-content: space-between; padding: 0 11px 9px 28px; align-items: center; }
.winbtns svg { width: 10px; height: 10px; fill: none; stroke: #333; }

.rtabs { height: 14px; flex: none; display: flex; gap: 3px; padding-left: 32px; background: #4a4a4a; border-bottom: 1px solid #393939; color: #d0d0d0; }
.rtabs button { padding: 0 5px 1px; }
.rtabs .on { background: #666; color: #fff; border: 1px solid #777; border-bottom: 0; padding: 0 4px 1px; }
.mini { margin-left: 8px; }
.mini span { width: 9px; height: 5px; background: #ddd; border-radius: 1px; }
.mini .caret { margin-right: 0; }

.ribbon { height: 68px; flex: none; display: flex; background: #414141; border-bottom: 1px solid #777; }
.panel { display: flex; flex-direction: column; background: #595959; border-right: 1px solid #4a4a4a; border-left: 1px solid #626262; flex: none; }
.body { display: flex; flex: 1; padding: 2px 0 0 1px; }
.panel footer { height: 14px; background: linear-gradient(#4d4d4d, #484848); display: flex; align-items: center; justify-content: center; position: relative; padding-bottom: 1px; }
.panel footer .caret { border-width: 3px 3px 0; }
.launch { position: absolute; right: 1px; font-size: 7px; }
.p-dis { width: 167px; } .p-edi { width: 193px; } .p-ann { width: 124px; } .p-lay { width: 200px; } .p-blo { width: 112px; }
.p-pro { width: 199px; } .p-gru { width: 51px; } .p-uti { width: 60px; } .p-app { width: 58px; } .p-vis { width: 42px; }
.p-dis .body { padding-left: 0; }
.big { flex-direction: column; line-height: 10px; justify-content: flex-start; padding-top: 1px; text-align: center; white-space: normal; }
.big svg { width: 24px; height: 24px; margin-bottom: 3px; }
.big .caret { margin-top: 2px; }
.col { display: flex; flex-direction: column; }
.col button, .row { height: 16px; gap: 1px; }
.row { display: flex; align-items: center; gap: 0; }
.grow { flex: 1; }
.w30 { width: 30px; } .w32 { width: 33px; } .w36 { width: 37px; } .w42 { width: 41px; } .w60 { width: 60px; }
.w47 { width: 47px; } .w57 { width: 57px; } .w66 { width: 66px; }
.act { background: #4680b8; }
.combo { flex: 1; height: 15px; display: flex; align-items: center; background: linear-gradient(#484848, #606060); border: 1px solid #383838; }
.laycol .combo { flex: none; width: 140px; height: 16px; }
.combo select { flex: 1; appearance: none; min-width: 0; padding-left: 3px; outline: 0; }
.sw { width: 9px; height: 9px; background: #fff; margin-left: 2px; flex: none; }
.combo .caret { border-width: 3px 3px 0; margin: 0 2px; }
.color .sw { margin: 0 4px 0 6px; }
.ln { width: 42px; height: 1px; background: #ddd; margin-left: 2px; }
.combo .ln + select { padding-left: 0; }

.ftabs { height: 19px; flex: none; display: flex; align-items: flex-end; padding: 0 0 1px 14px; background: #393939; color: #aaa; }
.ftabs button { width: 83px; height: 16px; padding: 0 9px 1px 8px; justify-content: space-between; background: #505050; clip-path: polygon(0 100%, 3px 30%, 6px 0, 79px 0, 82px 30%, 100% 100%); }
.ftabs .on { background: linear-gradient(#808080, #686868); color: #fff; }
.ftabs span { color: #333; font-size: 7px; }
.ftabs .add { width: 19px; height: 14px; margin-left: 2px; padding: 0; justify-content: center; border-radius: 3px; clip-path: none; font-size: 12px; color: #ddd; }

.canvas { flex: 1; position: relative; background: #1f2830; min-height: 0; }
.drawing { position: absolute; inset: 0; width: 100%; height: 100%; }
.gmin { stroke: #222c34; fill: none; }
.gmaj { stroke: #2b3740; fill: none; }
.plan { fill: none; stroke: #cbd0d4; }
.cross { stroke: #a9aeb2; }
.vplabel { position: absolute; left: 2px; top: 5px; color: #ddd; }
.vpbtns { position: absolute; right: 6px; top: 6px; display: flex; gap: 3px; }
.vpbtns svg { width: 10px; height: 10px; stroke: #eee; fill: none; }
.cube { position: absolute; right: 10px; top: 27px; width: 94px; height: 95px; display: grid; grid-template: 16px 1fr 16px / 16px 1fr 16px; place-items: center; font-size: 14px; font-weight: 700; color: #b9bec2; }
.ring { position: absolute; inset: 7px 6px; border: 9px solid #474f57; border-radius: 50%; }
.cube > span, .cube > button { z-index: 1; }
.cube .ring { z-index: 0; }
.n { grid-area: 1 / 2; } .w { grid-area: 2 / 1; } .e { grid-area: 2 / 3; } .s { grid-area: 3 / 2; }
.cube button { grid-area: 2 / 2; width: 35px; height: 35px; background: #b1b4b6; border: 6px solid #bdc0c2; color: #44494d; font-size: 9px; justify-content: center; }
.wcs { position: absolute; right: 41px; top: 135px; width: 31px; height: 12px; border-radius: 3px; background: #899096; border: 1px solid #a3a8ac; color: #4c5359; padding-left: 2px; gap: 4px; }
.navbar { position: absolute; right: 3px; top: 164px; width: 22px; height: 174px; background: #5a6167; border-radius: 3px; }
.navbar svg { width: 22px; height: 174px; }
.brand { position: absolute; left: 39px; top: 427px; color: #fff; font-family: Lato, sans-serif; display: flex; flex-direction: column; }
.crown { width: 12px; height: 10px; margin-left: 46px; }
.brand strong { font-size: 42px; line-height: 34px; font-weight: 900; }
.brand span { font-size: 10px; line-height: 14px; margin: 4px 0 0 2px; font-weight: 700; white-space: nowrap; }
.timer { position: absolute; left: 32px; top: 507px; width: 186px; height: 41px; background: #151d24cc; color: #fff; font: 32px/41px "Liberation Sans", Arial, sans-serif; padding-left: 7px; }

.cmd { position: absolute; left: 20%; right: 20%; bottom: 0; font: 8px/12px "DejaVu Sans Mono", "Liberation Mono", monospace; white-space: nowrap; }
.hist { display: flex; flex-direction: column; align-items: flex-start; gap: 2px; padding: 0 0 2px 41px; }
.hist p { background: #596066; color: #f2f2f2; padding: 0 1px; }
.hist .old { color: #c5c8ca; }
.cmdline { height: 18px; display: flex; align-items: center; background: #fff; color: #333; }
.grip { width: 36px; height: 18px; background: linear-gradient(#777, #555); color: #fff; display: flex; align-items: center; gap: 2px; padding-left: 2px; font-size: 10px; margin-right: 4px; }
.grip i { width: 3px; height: 12px; border-left: 1px dotted #bbb; border-right: 1px dotted #bbb; }
.grip svg { width: 13px; height: 13px; margin-left: 4px; }
.recent { width: 20px; color: #888; }
.cmdline b { color: #111; }
.opts { display: flex; gap: 3px; }
.opts button { background: #dcdcdc; height: 12px; border-radius: 2px; }
.opts em { color: #3322cc; }
.cmdline input { flex: 1; min-width: 20px; padding-left: 4px; outline: 0; }
.up { width: 12px; height: 18px; }
.up::after { content: ""; border: 3px solid transparent; border-bottom-color: #222; border-top: 0; }
.key { position: absolute; left: calc(50% - 15px); bottom: -11px; width: 30px; height: 42px; border: 2px solid #fff; background: #0a0a0abf; color: #fff; font: 22px/38px "Liberation Serif", serif; text-align: center; border-radius: 2px; }

.bottom { height: 26px; flex: none; display: flex; flex-wrap: wrap; align-items: flex-start; background: #3a3a3a; }
.ltabs { display: flex; padding-left: 7px; color: #aaa; }
.ltabs button { width: 44px; height: 13px; justify-content: center; background: #505050; clip-path: polygon(0 0, 100% 0, 40px 100%, 5px 100%); }
.ltabs .on { width: 47px; background: #777; color: #fff; font-weight: 700; clip-path: polygon(0 0, 100% 0, 43px 100%, 5px 100%); }
.ltabs .add { width: 18px; font-size: 11px; clip-path: none; border-radius: 0 0 4px 4px; }
.status { margin-left: auto; height: 19px; display: flex; align-items: center; background: #4b4b4b; border: 1px solid #606060; }
.status button { height: 16px; justify-content: center; min-width: 16px; }
.status .model { font-weight: 500; font-size: 9px; width: 44px; color: #fff; }
.status .sep { border-left: 1px solid #606060; min-width: 18px; }
.status .wide { min-width: 21px; }
.status .caret { border-width: 3px 3px 0; margin: 0 3px 0 2px; }
.status .tight { margin: 0 1px; }
.progress { width: 100%; height: 6px; border-bottom: 3px solid #4b4548; padding-left: 213px; }
.progress span { display: block; width: 82%; height: 2px; background: #c8c8c8; }
```
